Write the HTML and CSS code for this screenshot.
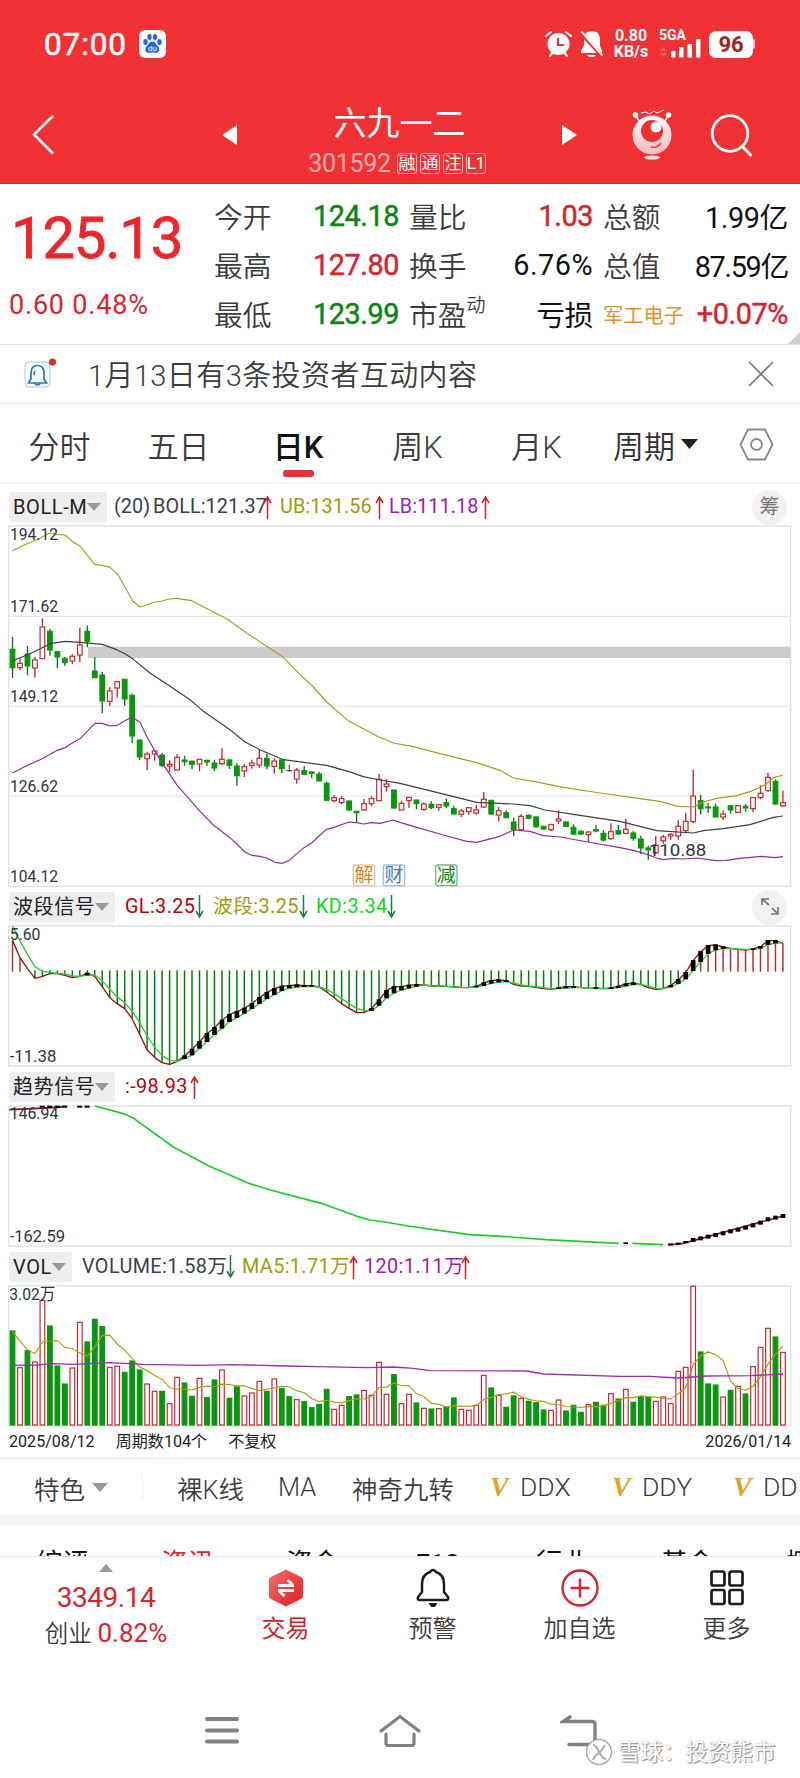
FILE: index.html
```html
<!DOCTYPE html>
<html lang="zh-CN">
<head>
    <meta charset="utf-8">
    <title>六九一二 301592</title>
    <link rel="stylesheet" href="styles.css">
</head>
<body>
    <div class="top">
        <div class="status">
            <span class="clock">07:00</span>
            <svg class="baidu" width="27" height="28" viewBox="0 0 27 28">
                <rect width="27" height="28" rx="6" fill="#fff"/>
                <g fill="#2468d8">
                    <ellipse cx="6.500" cy="12" rx="2.200" ry="3"/>
                    <ellipse cx="10.500" cy="7" rx="2.200" ry="3"/>
                    <ellipse cx="16" cy="7" rx="2.200" ry="3"/>
                    <ellipse cx="20.500" cy="12" rx="2.200" ry="3"/>
                    <path d="M13.300 11.500c3 0 4 3 5.800 5 2.500 3 .8 6.500-2.300 6.300-2.500-.3-4.500-.3-7 0-3.200.2-4.800-3.300-2.300-6.300 1.800-2 2.800-5 5.800-5z"/>
                </g>
                <text x="13.400" y="21" font-size="8" text-anchor="middle" fill="#fff">du</text>
            </svg>
            <span class="grow"></span>
            <svg width="29" height="28" viewBox="0 0 29 28">
                <g stroke="#fff" stroke-width="2.200" stroke-linecap="round">
                    <path d="M2 6l5-4M27 6l-5-4M6 26l3-4M23 26l-3-4"/>
                </g>
                <circle cx="14.500" cy="14" r="11" fill="#fff"/>
                <path d="M14 8v7h6" fill="none" stroke="#ef3134" stroke-width="2.200"/>
            </svg>
            <svg class="mute" width="25" height="28" viewBox="0 0 25 28">
                <path d="M13 1c-6 0-8 4-8 9v5l-3 6v2h21v-2l-2-5v-6c0-5-2-9-8-9zM8 25h9l-2 2h-5z" fill="#fff"/>
                <path d="M1 2l23 25" stroke="#ef3134" stroke-width="4"/>
                <path d="M2.500 1.500l21 24" stroke="#fff" stroke-width="2"/>
            </svg>
            <div class="speed">0.80<br>KB/s</div>
            <div class="signal">
                <span>5GA</span>
                <svg width="42" height="19" viewBox="0 0 42 19">
                    <path d="M1 12l3.500-4 3.500 4zM1 14h7l-3.500 4z" fill="#f7696b"/>
                    <g fill="#fff">
                        <rect x="12" y="12" width="4.500" height="6.500" rx="1"/>
                        <rect x="20" y="8" width="4.500" height="10.500" rx="1"/>
                        <rect x="28.500" y="5" width="4.500" height="13.500" rx="1"/>
                        <rect x="37" y="0" width="4.500" height="18.500" rx="1"/>
                    </g>
                </svg>
            </div>
            <div class="battery">96</div>
            <div class="battery-tip"></div>
        </div>

        <div class="header">
            <svg class="back" width="24" height="42" viewBox="0 0 24 42"><path d="M22 2L3 20.500 22 39.500" fill="none" stroke="#fff" stroke-width="2.600"/></svg>
            <svg class="prev" width="15" height="20" viewBox="0 0 15 20"><path d="M15 0v20L0 10z" fill="#fff"/></svg>
            <div class="stock">
                <div class="stock-name">六九一二</div>
                <div class="stock-code"><span>301592</span><i>融</i><i>通</i><i>注</i><i>L1</i></div>
            </div>
            <svg class="next" width="15" height="20" viewBox="0 0 15 20"><path d="M0 0v20L15 10z" fill="#fff"/></svg>
            <svg class="robot" width="42" height="52" viewBox="0 0 42 52">
                <defs><linearGradient id="rg" x2="0" y2="1"><stop offset="0" stop-color="#fff"/><stop offset="1" stop-color="#fbb9ba"/></linearGradient></defs>
                <path d="M4 6l5 7M38 6l-5 7" stroke="#fff" stroke-width="1.500"/>
                <circle cx="4.500" cy="6" r="2.800" fill="#fff"/><circle cx="37.500" cy="6" r="2.800" fill="#fff"/>
                <path d="M10 4l5-1 3 2 5-3 3 2 7-3" fill="none" stroke="#fff" stroke-width="1"/>
                <circle cx="21" cy="26" r="19.500" fill="url(#rg)"/>
                <circle cx="21" cy="22" r="11" fill="#ef3134"/>
                <circle cx="25" cy="18" r="5.500" fill="#fff"/>
                <path d="M20 38c4 1 8-1 10-4" fill="none" stroke="#ef3134" stroke-width="1.400"/>
                <ellipse cx="21" cy="48.500" rx="8" ry="2" fill="#fde0e0"/>
            </svg>
            <svg width="43" height="43" viewBox="0 0 43 43"><g fill="none" stroke="#fff" stroke-width="2.800"><circle cx="20" cy="19.500" r="17.800"/><path d="M32 32l9.500 10"/></g></svg>
        </div>
    </div>

    <div class="quote">
        <div class="price">
            <div class="price-now">125.13</div>
            <div class="price-change">0.60 0.48%</div>
        </div>
        <div class="figures">
            <span>今开</span><b class="green">124.18</b><span>量比</span><b class="red">1.03</b><span>总额</span><b>1.99亿</b>
            <span>最高</span><b class="red">127.80</b><span>换手</span><b class="wide">6.76%</b><span>总值</span><b class="tight">87.59亿</b>
            <span>最低</span><b class="green">123.99</b><span>市盈<sup>动</sup></span><b>亏损</b><span class="sector">军工电子</span><b class="red">+0.07%</b>
        </div>
        <div class="corner"></div>
    </div>

    <div class="notice">
        <svg width="34" height="44" viewBox="0 0 34 44">
            <rect x="1" y="5" width="25" height="25" rx="4" fill="#f8fbfd" stroke="#a9c8dc"/>
            <path d="M13.500 8.500c-5 0-6.500 3.500-6.500 7.500v6l-2.500 4h18l-2.500-4v-6c0-4-1.500-7.500-6.500-7.500zM11 26.500c.5 2 4.500 2 5 0M11 14c-.8 1-.8 2-.8 4" fill="none" stroke="#2a79b0" stroke-width="1.700"/>
            <circle cx="28.500" cy="5" r="3.500" fill="#dd2a2f"/>
        </svg>
        <span>1月13日有3条投资者互动内容</span>
        <svg width="26" height="26" viewBox="0 0 26 26"><path d="M1 1l24 24M25 1L1 25" stroke="#777" stroke-width="1.600"/></svg>
    </div>

    <div class="periods">
        <span>分时</span>
        <span>五日</span>
        <span class="active">日K</span>
        <span>周K</span>
        <span>月K</span>
        <span class="more">周期<svg width="17" height="10" viewBox="0 0 17 10"><path d="M0 0h17L8.500 10z" fill="#222"/></svg></span>
        <svg width="35" height="33" viewBox="0 0 35 33"><g fill="none" stroke="#888" stroke-width="1.800"><path d="M9 1.500h17L33.500 16.500 26 31.500H9L1.500 16.500z"/><circle cx="17.500" cy="16.500" r="5.500"/></g></svg>
    </div>

    <div class="indicator boll">
        <span class="pill">BOLL-M</span>
        <span>(20)</span>
        <span>BOLL:121.37</span><svg class="arrow up"><use href="#up"/></svg>
        <span class="olive">UB:131.56</span><svg class="arrow up"><use href="#up"/></svg>
        <span class="purple">LB:111.18</span><svg class="arrow up"><use href="#up"/></svg>
        <span class="round">筹</span>
    </div>
    <svg id="kline" class="chart" width="800" height="362" viewBox="0 16 2400 1086"></svg>

    <div class="indicator wave">
        <span class="pill">波段信号</span>
        <span class="crimson">GL:3.25</span><svg class="arrow down"><use href="#down"/></svg>
        <span class="olive">波段:3.25</span><svg class="arrow down"><use href="#down"/></svg>
        <span class="lime">KD:3.34</span><svg class="arrow down"><use href="#down"/></svg>
        <span class="round"><svg width="20" height="20" viewBox="0 0 20 20"><path d="M2 8V2h7M2 2l7 6M12 11l6 6M18 10v7h-7" fill="none" stroke="#777" stroke-width="1.700"/></svg></span>
    </div>
    <svg id="wave" class="chart" width="800" height="142" viewBox="0 137 2400 426"></svg>

    <div class="indicator trend">
        <span class="pill">趋势信号</span>
        <span class="crimson">:-98.93</span><svg class="arrow up"><use href="#up"/></svg>
    </div>
    <svg id="trend" class="chart" width="800" height="142" viewBox="0 122 2400 426"></svg>

    <div class="indicator vol">
        <span class="pill">VOL</span>
        <span>VOLUME:1.58万</span><svg class="arrow down"><use href="#down"/></svg>
        <span class="olive">MA5:1.71万</span><svg class="arrow up"><use href="#up"/></svg>
        <span class="purple">120:1.11万</span><svg class="arrow up"><use href="#up"/></svg>
    </div>
    <svg id="volume" class="chart" width="800" height="142" viewBox="0 16 2400 426"></svg>

    <div class="dates">
        <span>2025/08/12</span><span>周期数104个</span><span>不复权</span><span class="last">2026/01/14</span>
    </div>

    <div class="chips">
        <span class="special">特色<svg width="16" height="9" viewBox="0 0 16 9"><path d="M0 0h16L8 9z" fill="#999"/></svg></span>
        <span>裸K线</span>
        <span>MA</span>
        <span>神奇九转</span>
        <span class="vip"><em>V</em>DDX</span>
        <span class="vip"><em>V</em>DDY</span>
        <span class="vip"><em>V</em>DD</span>
    </div>

    <div class="sections">
        <span>综评</span><span class="on">资讯</span><span>资金</span><span>F10</span><span>行业</span><span>基金</span><span>概况</span>
    </div>

    <div class="toolbar">
        <div class="index">
            <svg width="14" height="8" viewBox="0 0 14 8"><path d="M7 0l7 8H0z" fill="#999"/></svg>
            <div class="index-value">3349.14</div>
            <div class="index-change">创业 <b>0.82%</b></div>
        </div>
        <div class="tool trade">
            <svg width="36" height="40" viewBox="0 0 36 40">
                <defs><linearGradient id="tg" x2="1" y2="1"><stop offset="0" stop-color="#fb6a6a"/><stop offset="1" stop-color="#df1f27"/></linearGradient></defs>
                <path d="M18 1.500l15 7.500q2 1 2 3v16q0 2-2 3L18 38.500 3 31q-2-1-2-3V12q0-2 2-3z" fill="url(#tg)"/>
                <path d="M10 17.500h16M19.500 12l5.500 5M26 22.500H10M16.500 28L11 23" fill="none" stroke="#fff" stroke-width="2.800"/>
            </svg>
            <span>交易</span>
        </div>
        <div class="tool">
            <svg width="36" height="40" viewBox="0 0 36 40">
                <path d="M18 2c-1.500 0-2 1-3 2-6 2-8 7-8 12v8l-4 5q-1 3 2 3h26q3 0 2-3l-4-5v-8c0-5-2-10-8-12-1-1-1.500-2-3-2z" fill="none" stroke="#1c1c1e" stroke-width="2.500" stroke-linejoin="round"/>
                <path d="M13.500 35h9l-2.500 4h-4z" fill="#1c1c1e"/>
            </svg>
            <span>预警</span>
        </div>
        <div class="tool">
            <svg width="40" height="40" viewBox="0 0 40 40"><g fill="none" stroke="#cf2730" stroke-width="2.400"><circle cx="20" cy="20" r="17.500"/><path d="M10.500 20h19M20 10.500v19"/></g></svg>
            <span>加自选</span>
        </div>
        <div class="tool">
            <svg width="36" height="40" viewBox="0 0 36 40"><g fill="none" stroke="#1c1c1e" stroke-width="2.700"><rect x="2.500" y="3.500" width="13" height="14" rx="2"/><rect x="20.500" y="3.500" width="13" height="14" rx="2"/><rect x="2.500" y="22" width="13" height="14" rx="2"/><rect x="20.500" y="22" width="13" height="14" rx="2"/></g></svg>
            <span>更多</span>
        </div>
    </div>

    <div class="navbar">
        <svg width="34" height="34" viewBox="0 0 34 34"><path d="M2 5h30M2 16.500h30M2 27.500h30" stroke="#808080" stroke-width="4" stroke-linecap="round"/></svg>
        <svg width="44" height="34" viewBox="0 0 44 34"><path d="M3 17L22 2.500 41 17M8 20v9q0 2.500 2.500 2.500h23q2.500 0 2.500-2.500v-9" fill="none" stroke="#808080" stroke-width="3.200" stroke-linecap="round"/></svg>
        <svg width="38" height="34" viewBox="0 0 38 34"><path d="M10 3L3 7.500h29q3 0 3 3v20H9" fill="none" stroke="#808080" stroke-width="3.400" stroke-linecap="round"/></svg>
        <div class="watermark">
            <svg width="28" height="28" viewBox="0 0 28 28"><circle cx="14" cy="14" r="12.500" fill="#fff" stroke="#aaa" stroke-width="1.400"/><path d="M8 7c2 0 3 1 5 5s5 9 8 9M20 7c-3 4-3 6-6 8s-5 3-6 7" fill="none" stroke="#aaa" stroke-width="2"/></svg>
            <span>雪球：投资熊市</span>
        </div>
    </div>

    <svg width="0" height="0" class="defs">
        <symbol id="up" viewBox="0 0 9 24"><path d="M4.500 24V2M1 8l3.500-6L8 8" fill="none" stroke="#c8232c" stroke-width="1.500"/></symbol>
        <symbol id="down" viewBox="0 0 9 24"><path d="M4.500 0v22M1 16l3.500 6L8 16" fill="none" stroke="#1f7a45" stroke-width="1.500"/></symbol>
    </svg>
    <script src="charts.js"></script>
</body>
</html>
```
FILE: styles.css
```css
* {
    box-sizing: border-box;
}

body {
    margin: 0;
    width: 800px;
    height: 1778px;
    overflow: hidden;
    background: #fff;
    color: #3c3c3c;
    font-family: Roboto, "Noto Sans CJK SC", sans-serif;
}

svg {
    display: block;
    flex: none;
}

.red { color: #d3262f; }
.green { color: #0d8414; }
.olive { color: #9d9c0c; }
.purple { color: #a020a8; }
.crimson { color: #b8000e; }
.lime { color: #10d81c; }

.top {
    height: 184px;
    background: #f13134;
    border-bottom: 1px solid #b8383a;
    color: #fff;
}

.status {
    display: flex;
    align-items: center;
    height: 88px;
    padding: 0 45px 0 44px;
}

.clock {
    width: 95px;
    font-size: 31.5px;
    letter-spacing: 0.9px;
    -webkit-text-stroke: 0.5px #fff;
}

.grow {
    flex: 1;
}

.mute {
    margin-left: 6px;
}

.speed {
    width: 36px;
    margin-left: 9px;
    font-size: 16px;
    line-height: 16px;
    font-weight: 700;
    text-align: center;
}

.signal {
    width: 42px;
    margin-left: 10px;
    font-size: 14px;
    line-height: 10px;
    font-weight: 700;
}

.signal svg {
    margin-top: -1px;
}

.battery {
    width: 44px;
    height: 27px;
    margin-left: 8px;
    border-radius: 7px;
    background: #fff;
    color: #a32024;
    font-size: 22px;
    line-height: 28px;
    font-weight: 700;
    text-align: center;
}

.battery-tip {
    width: 2px;
    height: 10px;
    border-radius: 0 2px 2px 0;
    background: #fbb;
}

.header {
    display: flex;
    align-items: center;
    height: 94px;
    padding: 0 47px 0 31px;
}

.prev {
    margin-left: 167px;
}

.stock {
    width: 326px;
    padding-top: 8px;
    text-align: center;
}

.stock-name {
    font-size: 33px;
    line-height: 46px;
}

.stock-code {
    display: flex;
    justify-content: center;
    align-items: center;
    gap: 3px;
    margin-top: 3px;
    padding-right: 5px;
    font-size: 25px;
    line-height: 28px;
    letter-spacing: -0.3px;
}

.stock-code span {
    margin-right: 3px;
    opacity: 0.6;
}

.stock-code i {
    width: 20px;
    height: 21px;
    border: 1px solid #fbb;
    border-radius: 3px;
    font-size: 17px;
    font-style: normal;
    line-height: 18px;
    text-align: center;
}

.robot {
    margin-left: 54px;
}

.robot + svg {
    margin-left: 37px;
}

.quote {
    position: relative;
    display: flex;
    height: 161px;
    border-bottom: 1px solid #e4e4e4;
}

.price {
    width: 214px;
    padding-left: 9px;
    color: #d3262f;
}

.price-now {
    margin-top: 18px;
    padding-left: 2px;
    font-size: 58px;
    line-height: 72px;
    letter-spacing: -1.2px;
    color: #ee252b;
    -webkit-text-stroke: 0.8px #ee252b;
}

.price-change {
    margin-top: 15px;
    font-size: 27px;
    line-height: 32px;
    letter-spacing: 0.8px;
}

.figures {
    display: grid;
    grid-template-columns: 70px 115px 80px 114px 70px 125px;
    grid-auto-rows: 49px;
    align-items: center;
    padding-top: 7px;
    font-size: 28.8px;
    white-space: nowrap;
}

.figures span {
    font-weight: 350;
}

.figures span:nth-child(6n + 3),
.figures span:nth-child(6n + 5) {
    padding-left: 10px;
}

.figures b {
    font-weight: 400;
    text-align: right;
    letter-spacing: -0.4px;
}

.figures .red,
.figures .green {
    -webkit-text-stroke: 0.5px currentColor;
}

.figures b:not(.red):not(.green) {
    color: #111;
}

.figures .wide {
    letter-spacing: 0.5px;
}

.figures .tight {
    letter-spacing: -1.3px;
}

.figures sup {
    font-size: 19px;
    line-height: 0;
    vertical-align: 14px;
}

.figures .sector {
    color: #d9962f;
    font-size: 20.3px;
    font-weight: 400;
}

.corner {
    position: absolute;
    right: 0;
    bottom: 0;
    border: 6px solid transparent;
    border-right-color: #d0d0d0;
    border-bottom-color: #d0d0d0;
}

.notice {
    display: flex;
    align-items: center;
    height: 59px;
    padding: 0 26px 0 24px;
    border-bottom: 1px solid #eaeaea;
    font-size: 29px;
}

.notice svg:first-child {
    margin-top: 10px;
}

.notice span {
    flex: 1;
    margin: -3px 0 0 30px;
    font-weight: 350;
    letter-spacing: 0.4px;
}

.periods {
    display: grid;
    grid-template-columns: 119px 119px 120px 119px 119px 143px 1fr;
    align-items: center;
    height: 80px;
    border-bottom: 1px solid #eee;
    font-size: 31px;
    font-weight: 350;
}

.periods > span {
    display: flex;
    position: relative;
    justify-content: center;
    align-items: center;
    height: 80px;
}

.periods .active {
    color: #111;
    font-weight: 500;
}

.periods .active::after {
    content: "";
    position: absolute;
    bottom: 7px;
    width: 31px;
    height: 7px;
    border-radius: 3px;
    background: #e03537;
}

.periods .more {
    justify-content: flex-start;
    padding-left: 17px;
    gap: 6px;
    color: #333;
}

.indicator {
    display: grid;
    align-items: center;
    height: 40px;
    padding: 2px 13px 0 9px;
    font-size: 19.8px;
    line-height: 30px;
    letter-spacing: 0.4px;
    white-space: nowrap;
    color: #3a3f48;
}

.boll {
    height: 42px;
    padding-top: 4px;
    grid-template-columns: 105px 39px 110px 17px 95px 14px 92px 10px 1fr;
    letter-spacing: 0.1px;
}

.wave {
    grid-template-columns: 116px 70px 18px 86px 17px 71px 9px 1fr;
}

.trend {
    grid-template-columns: 116px 65px 9px;
}

.vol {
    grid-template-columns: 73px 144px 16px 107px 15px 97px 9px;
}

.pill {
    display: flex;
    justify-self: start;
    align-items: center;
    height: 30px;
    padding: 0 6px 0 4px;
    border-radius: 3px;
    background: #eee;
    color: #222;
    font-size: 20px;
    letter-spacing: 0.6px;
}

.pill::after {
    content: "";
    border: 7px solid transparent;
    border-top: 8px solid #999;
    border-bottom: 0;
}

.arrow {
    width: 9px;
    height: 24px;
}

.round {
    display: flex;
    justify-self: end;
    align-items: center;
    justify-content: center;
    width: 35px;
    height: 35px;
    border-radius: 50%;
    background: #f3f0f1;
    color: #777;
    font-size: 20px;
}

.chart {
    margin: -1px 0;
    font-size: 51px;
}

.dates {
    display: flex;
    height: 33px;
    padding: 1px 9px 0;
    border-bottom: 1px solid #eaeaea;
    font-size: 16.1px;
    line-height: 30px;
    color: #222;
}

.dates span {
    margin-right: 21px;
}

.dates .last {
    margin: 0 0 0 auto;
}

.chips {
    display: grid;
    grid-template-columns: 143px 101px 74px 138px 122px 121px 101px;
    align-items: center;
    height: 56px;
    font-size: 25.5px;
    font-weight: 350;
    white-space: nowrap;
}

.chips .special {
    display: flex;
    align-items: center;
    gap: 7px;
    height: 28px;
    padding-left: 34px;
    border-right: 1px solid #eee;
}

.chips span:nth-child(n + 2) {
    padding-left: 34px;
}

.chips .vip {
    font-size: 26.5px;
}

.vip em {
    display: inline-block;
    width: 30px;
    color: #e3a128;
    font-family: "Liberation Serif", serif;
    font-weight: 700;
    font-size: 28px;
}

.sections {
    display: grid;
    grid-template-columns: repeat(7, 125px);
    height: 42px;
    border-top: 11px solid #f6f6f6;
    border-bottom: 1px solid #e8e8e8;
    overflow: hidden;
    font-size: 26.5px;
    line-height: 30px;
    padding-top: 22px;
    text-align: center;
    color: #111;
}

.sections .on {
    color: #d3262f;
}

.toolbar {
    display: grid;
    grid-template-columns: 212px repeat(4, 147px);
    height: 104px;
}

.index,
.tool {
    display: flex;
    flex-direction: column;
    align-items: center;
    font-size: 24px;
    font-weight: 350;
}

.index {
    padding-top: 7px;
}

.index-value {
    margin-top: 9px;
    font-size: 28px;
    line-height: 34px;
    font-weight: 400;
    letter-spacing: -0.5px;
    color: #d3262f;
}

.index-change {
    font-size: 23.5px;
    line-height: 36px;
}

.index-change b {
    color: #d3262f;
    font-size: 26px;
    font-weight: 400;
}

.tool {
    padding-top: 11px;
}

.tool span {
    line-height: 43px;
}

.trade {
    color: #c9252d;
    font-weight: 400;
}

.navbar {
    position: relative;
    display: flex;
    height: 117px;
    padding: 53px 0 0 205px;
}

.navbar svg:nth-child(2) {
    margin-left: 139px;
}

.navbar svg:nth-child(3) {
    margin-left: 138px;
}

.watermark {
    position: absolute;
    left: 585px;
    top: 76px;
    display: flex;
    align-items: center;
    gap: 5px;
    color: #fff;
    font-size: 22.5px;
    line-height: 30px;
    text-shadow: 1px 1px 1px #888, 0 0 2px #aaa;
}

.defs {
    position: absolute;
}
```
FILE: charts.js
```js
// All chart coordinates are in thirds of a pixel
const NS = 'http://www.w3.org/2000/svg';
const RED = '#c4252d';
const GREEN = '#0b960f';
const xAt = i => 37.5 + i * 22.44;

function add(svg, tag, attrs, text) {
    const el = document.createElementNS(NS, tag);
    for (const k in attrs) el.setAttribute(k, attrs[k]);
    if (text) el.textContent = text;
    svg.appendChild(el);
}

function line(svg, points, color, width = 3.5) {
    add(svg, 'polyline', { points, fill: 'none', stroke: color, 'stroke-width': width, 'stroke-linejoin': 'round' });
}

function frame(svg, top, bottom, rows) {
    add(svg, 'rect', { x: 26, y: top, width: 2346, height: bottom - top, fill: 'none', stroke: '#e2e2e4', 'stroke-width': 4 });
    (rows || []).forEach(y => add(svg, 'path', { d: `M26 ${y}H2372`, stroke: '#e4e4e4', 'stroke-width': 3 }));
}

function label(svg, text, x, y, width) {
    add(svg, 'text', { x, y, textLength: width, lengthAdjust: 'spacingAndGlyphs', fill: '#2c3342' }, text);
}

// g/r/d (doji), high, body top, body bottom, low
const candles = `g351,388,445,475|r416,430,445,452|g378,402,440,466|r411,420,446,474|r296,321,418,418|g328,334,392,408|g394,395,413,445|g413,415,430,438|r404,409,425,434|r324,375,407,428
g318,334,366,383|g413,453,475,475|g457,465,545,581|r502,513,546,559|r485,485,506,534|g478,478,539,558|g522,526,650,671|g660,660,713,721|r696,702,718,752|r691,693,704,723
g700,705,739,741|r722,733,740,757|r704,712,752,752|g709,720,727,738|g722,724,735,748|r718,718,734,755|g720,721,728,738|g720,729,746,755|r686,718,733,736|g718,720,738,748
g730,738,769,798|r733,740,755,772|r720,729,738,747|r690,715,737,744|g702,715,740,749|r716,723,741,762|g718,720,748,760|d735,752,754,756|r745,750,779,792|g739,752,765,767
g756,756,762,776|g756,762,785,785|g786,790,843,843|r826,833,844,848|r830,836,850,854|g843,843,872,874|g874,874,880,908|r838,851,872,874|r830,836,853,860|r762,778,844,844
r778,792,802,816|g810,810,866,868|r843,850,872,872|r832,832,844,864|g840,840,853,869|r848,852,870,874|g845,853,865,869|r854,854,864,873|g837,848,860,866|g858,866,884,884
r868,873,885,892|r862,863,877,885|r856,870,881,885|r817,838,863,865|g841,841,884,886|r862,872,887,905|g872,878,895,895|g894,906,930,950|r884,889,931,933|g884,886,897,899
g889,891,922,924|g918,919,929,931|r912,914,931,934|r872,897,905,912|g905,906,921,923|g914,922,944,946|g932,934,944,946|r934,936,946,966|g916,929,935,938|g932,940,962,966
r911,935,958,960|g915,932,944,946|r898,928,942,944|g934,939,957,963|g948,957,986,1003|g978,984,992,1020|r948,976,1000,1002|r946,951,964,972|r941,943,950,960|r902,919,950,960
r880,904,934,940|r750,828,907,910|g826,842,868,884|g849,861,866,880|g852,861,893,893|r872,882,893,900|g856,857,872,882|r856,857,879,881|g853,859,866,876|r832,833,868,877
r797,820,835,839|r759,772,814,816|g780,784,854,856|r813,848,860,862`.split(/[|\n]/).map(s => [s[0], ...s.slice(1).split(',').map(Number)]);

const volumes = [153, 263, 212, 246, 61, 138, 258, 312, 264, 127, 186, 118, 140, 262, 259, 277, 243, 270, 312, 334, 334, 371, 292, 309, 349, 295,
    353, 300, 270, 355, 319, 348, 339, 304, 334, 297, 325, 350, 359, 365, 383, 373, 328, 388, 376, 350, 345, 331, 346, 247, 343, 284,
    371, 343, 369, 385, 387, 386, 382, 354, 388, 391, 376, 286, 324, 346, 382, 348, 355, 364, 368, 390, 391, 360, 393, 376, 397, 374,
    367, 376, 341, 357, 328, 367, 350, 352, 364, 351, 371, 274, 262, 19, 216, 312, 315, 351, 331, 319, 342, 260, 202, 145, 171, 217];

const gl = [183, 235, 268, 297, 291, 283, 283, 288, 295, 291, 282, 291, 322, 355, 373, 388, 418, 465, 512, 534, 550, 555, 546, 530, 510, 487,
    463, 445, 423, 406, 397, 387, 373, 355, 340, 328, 321, 319, 317, 319, 319, 323, 338, 355, 373, 387, 400, 400, 388, 362, 334, 322,
    322, 318, 316, 317, 320, 320, 321, 323, 325, 325, 321, 311, 304, 302, 304, 315, 320, 321, 324, 328, 330, 326, 322, 322, 325, 327,
    326, 328, 326, 321, 314, 311, 316, 325, 330, 328, 319, 301, 280, 244, 217, 199, 197, 203, 207, 210, 212, 209, 202, 184, 184, 192];

const kd = [140, 185, 225, 262, 276, 279, 282, 284, 290, 291, 287, 287, 304, 330, 352, 370, 395, 430, 470, 503, 528, 543, 546, 538, 527, 507,
    487, 466, 447, 427, 415, 402, 388, 373, 358, 346, 334, 326, 323, 322, 321, 323, 330, 343, 358, 373, 387, 394, 394, 378, 356, 341,
    332, 326, 321, 317, 319, 320, 321, 322, 324, 324, 323, 319, 312, 308, 307, 311, 317, 320, 322, 325, 329, 328, 326, 325, 325, 327,
    328, 328, 328, 325, 320, 316, 315, 320, 327, 328, 323, 313, 299, 274, 247, 223, 212, 208, 207, 209, 210, 211, 207, 196, 191, 190];

function drawKline() {
    const svg = document.getElementById('kline');
    frame(svg, 19, 1100, [290, 560, 829]);
    add(svg, 'rect', { x: 264, y: 381, width: 2108, height: 34, fill: '#ccc' });
    candles.forEach(([t, high, top, bottom, low], i) => {
        const x = xAt(i);
        if (t === 'd') {
            add(svg, 'path', { d: `M${x} ${high}V${low}M${x - 9} 753h18`, stroke: '#2c3342', 'stroke-width': 3 });
            return;
        }
        const c = t === 'g' ? GREEN : RED;
        add(svg, 'path', { d: `M${x} ${high}V${top}M${x} ${bottom}V${low}`, stroke: t === 'g' ? '#08750c' : c, 'stroke-width': 4 });
        add(svg, 'rect', {
            x: x - 7, y: top + 1, width: 14, height: Math.max(bottom - top - 2, 2),
            fill: t === 'g' ? c : '#fff', stroke: c, 'stroke-width': 3.5
        });
    });
    line(svg, '37,93 75,75 110,60 150,40 172,45 195,46 218,66 240,79 262,107 285,135 307,137 330,143 352,162 375,202 398,244 420,262 465,247 487,244 508,238 530,236 575,243 685,300 740,340 850,413 900,465 940,502 980,547 1047,605 1137,652 1180,670 1240,681 1320,702 1430,729 1500,752 1540,775 1600,785 1690,803 1800,820 1920,837 1980,845 2032,860 2080,862 2110,847 2150,836 2210,828 2250,816 2290,798 2325,772 2349,767', '#a39f1c');
    line(svg, '37,424 100,398 150,372 195,365 240,368 307,374 350,390 375,402 400,419 450,460 500,493 570,540 610,575 690,630 735,667 780,690 850,720 980,737 1047,756 1090,771 1140,781 1200,791 1310,818 1430,848 1540,853 1590,858 1635,871 1740,887 1860,905 1970,933 2080,940 2110,933 2170,927 2250,915 2320,893 2349,889', '#3e3c46');
    line(svg, '37,760 80,738 125,718 172,692 195,684 218,669 240,657 285,611 307,611 330,619 352,617 375,603 396,592 420,608 440,650 465,695 500,750 530,795 600,875 640,916 690,954 735,997 755,1007 780,1010 800,1015 825,1028 848,1031 868,1022 890,1002 912,984 935,970 960,946 980,929 1000,924 1047,907 1070,909 1090,913 1115,909 1140,911 1180,901 1200,908 1240,920 1330,946 1400,965 1430,968 1500,950 1540,931 1590,935 1630,948 1680,952 1730,961 1860,984 1900,992 1935,1002 1970,1015 1990,1020 2020,1016 2050,1018 2090,1015 2150,1023 2180,1022 2220,1016 2285,1010 2325,1014 2349,1011', '#8f2d9c');
    label(svg, '194.12', 30, 61, 144);
    label(svg, '171.62', 30, 277, 144);
    label(svg, '149.12', 30, 547, 144);
    label(svg, '126.62', 30, 818, 144);
    label(svg, '104.12', 30, 1088, 144);
    label(svg, '110.88', 1946, 1010, 173);
    // event marks
    [['解', 1060, '#d9831a', '#e3c48e'], ['财', 1150, '#3f7fc0', '#9cc0e0'], ['减', 1307, '#158a20', '#79b583']].forEach(([t, x, c, b]) => {
        add(svg, 'rect', { x, y: 1036, width: 64, height: 62, rx: 6, fill: '#fff', stroke: b, 'stroke-width': 4 });
        add(svg, 'text', { x: x + 32, y: 1087, 'text-anchor': 'middle', 'font-size': 57, fill: c }, t);
    });
}

function drawWave() {
    const svg = document.getElementById('wave');
    frame(svg, 140, 560);
    gl.forEach((y, i) => {
        const up = i < 2 || i > 91;
        if (i === 2 || i === 91) return;
        add(svg, 'path', { d: `M${xAt(i)} ${up ? 277 : 273}V${y}`, stroke: up ? '#b0333a' : '#0c7a12', 'stroke-width': 4.5 });
    });
    const pts = list => list.map((y, i) => `${xAt(i)},${y}`).join(' ');
    line(svg, pts(gl), '#8a1418', 4);
    line(svg, pts(kd), '#2fc93a', 4);
    gl.forEach((y, i) => {
        if (i > 3 && y < kd[i]) {
            add(svg, 'rect', { x: xAt(i) - 7, y: y - 2, width: 14, height: kd[i] - y + 3, fill: '#000' });
        }
    });
    label(svg, '5.60', 29, 181, 92);
    label(svg, '-11.38', 29, 547, 140);
}

function drawTrend() {
    const svg = document.getElementById('trend');
    frame(svg, 125, 545);
    line(svg, '28,136 100,133 170,129 200,126', '#7c1a1e', 5);
    [4, 5, 6, 7, 9, 10].forEach(i => add(svg, 'rect', { x: xAt(i) - 8, y: 124, width: 15, height: 6, fill: '#000' }));
    line(svg, '285,125 367,147 398,160 520,248 628,306 750,358 811,377 964,417 1071,456 1109,467 1155,473 1224,485 1408,511 1507,516 1637,526 1856,537', '#1ecb2a', 5);
    line(svg, '1897,537 1989,541', '#1ecb2a', 5);
    add(svg, 'rect', { x: 1870, y: 534, width: 14, height: 5, fill: '#000' });
    line(svg, '2004,542 2050,537 2349,455', '#8a1418', 5);
    [541, 539, 534, 525, 520, 515, 510, 505, 499, 494, 488, 481, 473, 463, 458, 453].forEach((y, k) => {
        add(svg, 'rect', { x: xAt(k + 88) - 7, y: y - 4, width: 14, height: k < 3 ? 6 : 12, fill: '#000' });
    });
    label(svg, '146.94', 29, 165, 146);
    label(svg, '-162.59', 29, 532, 166);
}

function drawVolume() {
    const svg = document.getElementById('volume');
    frame(svg, 19, 438);
    volumes.forEach((y, i) => {
        const green = candles[i][0] === 'g' || candles[i][0] === 'd';
        add(svg, 'rect', {
            x: xAt(i) - 7, y: y + 1, width: 14, height: 435 - y,
            fill: green ? GREEN : '#fff', stroke: green ? GREEN : RED, 'stroke-width': 3.5
        });
    });
    const head = [155, 185, 210, 222];
    const ma5 = volumes.map((v, i) => {
        const y = i < 4 ? head[i] : volumes.slice(i - 4, i + 1).reduce((a, b) => a + b) / 5;
        return `${xAt(i)},${y}`;
    }).join(' ');
    line(svg, ma5, '#b09a18');
    line(svg, '37,257 110,256 160,252 220,254 330,249 430,254 600,257 700,255 860,259 950,261 1100,264 1180,262 1240,266 1290,273 1580,274 1630,283 1860,290 1950,290 2035,295 2120,289 2250,288 2349,283', '#a02cab', 4);
    label(svg, '3.02万', 28, 61, 138);
}

drawKline();
drawWave();
drawTrend();
drawVolume();
```
